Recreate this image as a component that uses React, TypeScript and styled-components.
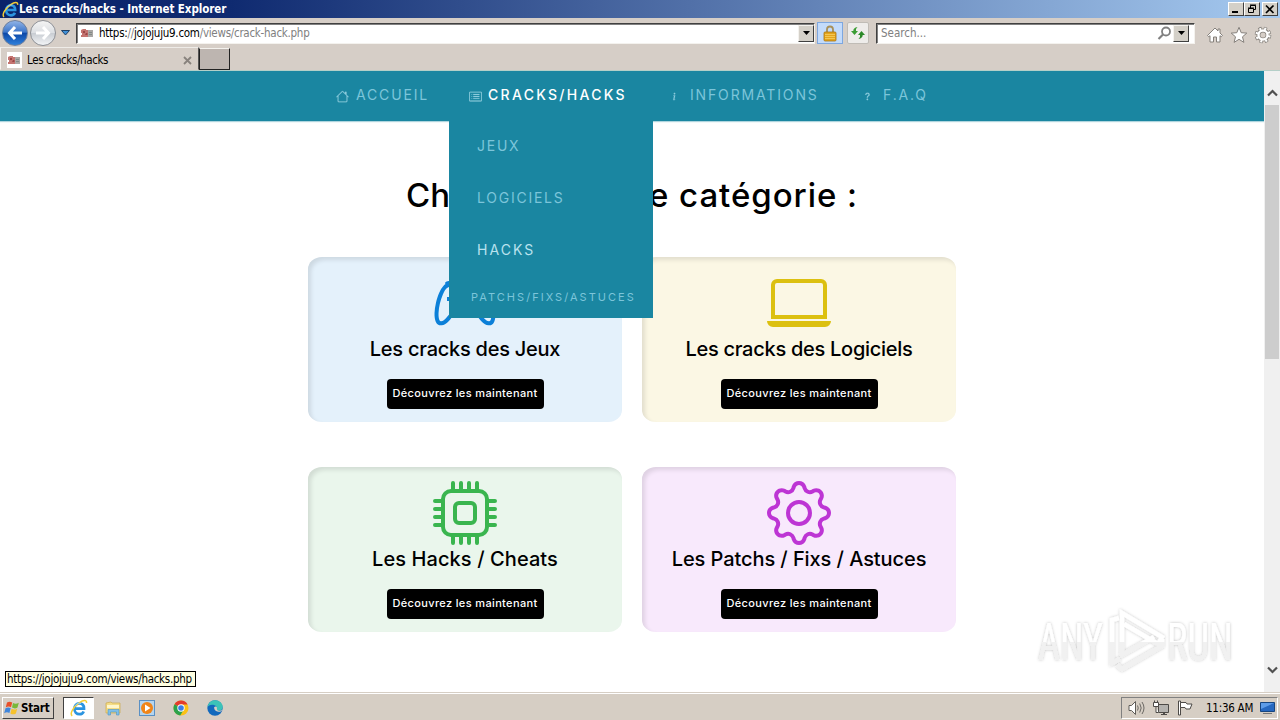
import React from "react";
import styled, { createGlobalStyle } from "styled-components";
import {
  BsHouse,
  BsCardList,
  BsInfo,
  BsQuestion,
  BsController,
  BsLaptop,
  BsCpu,
  BsGear,
} from "react-icons/bs";

const GlobalStyle = createGlobalStyle`
    * { box-sizing: border-box; }
    body {
        margin: 0;
        background: #fff;
        overflow: hidden;
    }
`;

const uiFont = `"DejaVu Sans Condensed", "DejaVu Sans", sans-serif`;
const siteFont = `Inter, Lato, sans-serif`;

const Screen = styled.div`
    width: 1280px;
    height: 720px;
    position: relative;
    display: flex;
    flex-direction: column;
    font-family: ${uiFont};
    font-stretch: condensed;
    font-size: 11px;
    color: #000;
    white-space: nowrap;
`;

/* ---------- browser window ---------- */

const TitleBar = styled.header`
    height: 18px;
    flex: none;
    display: flex;
    align-items: center;
    padding: 0 2px 0 2px;
    background: linear-gradient(90deg, #0a246a 0%, #0f2a70 18%, #a6caf0 100%);
`;

const Title = styled.span`
    flex: 1;
    color: #fff;
    font-weight: bold;
    font-size: 11.5px;
    letter-spacing: -0.07px;
`;

const WindowButton = styled.span<{ $gap?: number }>`
    width: 16px;
    height: 14px;
    margin-left: ${(p) => p.$gap || 0}px;
    background: #d4d0c8;
    border: 1px solid;
    border-color: #fff #404040 #404040 #fff;
    display: flex;
    align-items: center;
    justify-content: center;
`;

const Toolbar = styled.div`
    height: 29px;
    flex: none;
    display: flex;
    align-items: center;
    padding: 1px 0 0 2px;
    background: #d6cec7;
`;

const NavCircle = styled.span<{ $active?: boolean }>`
    width: 26px;
    height: 26px;
    margin-right: 2px;
    border-radius: 50%;
    border: 1px solid ${(p) => (p.$active ? "#6e7f9c" : "#8d9096")};
    background: ${(p) =>
      p.$active
        ? "linear-gradient(#8fb3e6 0%, #3d76ca 46%, #0d49a8 52%, #2e7fdb 100%)"
        : "linear-gradient(#f4f4f4 0%, #dcdfe3 48%, #c9cdd3 52%, #f2f4f6 100%)"};
    display: flex;
    align-items: center;
    justify-content: center;
`;

const Field = styled.div<{ $width: number }>`
    width: ${(p) => p.$width}px;
    height: 21px;
    display: flex;
    align-items: center;
    background: #fff;
    border: 1px solid;
    border-color: #404040 #f4f2ee #f4f2ee #404040;
    box-shadow: inset 1px 1px 0 #808080;
`;

const Url = styled.span`
    flex: 1;
    font-size: 11.5px;
    letter-spacing: -0.27px;
    color: #808080;

    b{
        font-weight: normal;
        color: #000;
    }
`;

const Search = styled(Url)`
    padding-left: 4px;
    letter-spacing: 0;
`;

const DropButton = styled.span`
    width: 16px;
    height: 17px;
    background: #d4d0c8;
    border: 1px solid;
    border-color: #f4f2ee #404040 #404040 #f4f2ee;
    display: flex;
    align-items: center;
    justify-content: center;
`;

const ToolButton = styled.span<{ $lit?: boolean }>`
    width: ${(p) => (p.$lit ? 26 : 22)}px;
    height: 22px;
    margin-left: ${(p) => (p.$lit ? 2 : 4)}px;
    border: 1px solid ${(p) => (p.$lit ? "#7da7e0" : "#c0bcb6")};
    border-radius: ${(p) => (p.$lit ? 0 : 2)}px;
    background: ${(p) => (p.$lit ? "#c3dbfb" : "#eeecea")};
    display: flex;
    align-items: center;
    justify-content: center;
`;

const ToolIcons = styled.div`
    display: flex;
    align-items: center;
    gap: 6px;
    margin: 3px 0 0 11px;
`;

const TabRow = styled.div`
    height: 24px;
    flex: none;
    display: flex;
    background: #d6cec7;
    border-bottom: 1px solid #b4cfc8;
`;

const Tab = styled.div`
    width: 199px;
    height: 23px;
    display: flex;
    align-items: center;
    padding: 3px 6px 0 6px;
    border: 1px solid;
    border-color: #efece8 #555 transparent #f4f2ee;

    span{
        flex: 1;
        padding-left: 5px;
        font-size: 11.5px;
        letter-spacing: -0.4px;
    }
`;

const FaviconBox = styled.i`
    width: 15px;
    height: 16px;
    background: #fff;
    display: flex;
    align-items: center;
    justify-content: center;
`;

const NewTab = styled.div`
    width: 31px;
    height: 22px;
    margin-top: 1px;
    background: #bdb5b0;
    border: 1px solid;
    border-color: #f4f2ee #222 #222 #222;
`;

/* ---------- page ---------- */

const Viewport = styled.div`
    height: 621px;
    flex: none;
    display: flex;
`;

const Page = styled.div`
    width: 1264px;
    background: #fff;
    font-family: ${siteFont};
    font-stretch: normal;
`;

const Menu = styled.nav`
    height: 50px;
    padding-left: 316px;
    display: flex;
    background: #1a86a1;
    box-shadow: 0 1px 1px rgba(26, 134, 161, 0.35);
`;

const MenuItem = styled.div<{ $width: number; $active?: boolean }>`
    position: relative;
    width: ${(p) => p.$width}px;
    padding-left: 20px;
    display: flex;
    align-items: center;
    font-size: 14px;
    letter-spacing: 1.85px;
    color: ${(p) => (p.$active ? "#fff" : "#7cc5da")};

    > span{
        margin-top: -3px;
        font-weight: ${(p) => (p.$active ? 500 : 400)};
        letter-spacing: ${(p) => (p.$active ? 2.3 : 1.85)}px;
    }
`;

const MenuIcon = styled.i<{ $box: number }>`
    width: ${(p) => p.$box}px;
    display: flex;
    color: #8ccbdc;
    font-size: 13px;

    svg{
        stroke: currentColor;
        stroke-width: 0.2;
    }
`;

const SubMenu = styled.div`
    position: absolute;
    top: 50px;
    left: 0;
    width: 204px;
    height: 197px;
    z-index: 2;
    background: #1a86a1;
`;

const SubItem = styled.div<{ $small?: boolean; $hover?: boolean }>`
    height: ${(p) => (p.$small ? 42 : 52)}px;
    line-height: ${(p) => (p.$small ? 41 : 50)}px;
    padding-left: ${(p) => (p.$small ? 22 : 28)}px;
    font-size: ${(p) => (p.$small ? 11 : 14)}px;
    letter-spacing: ${(p) => (p.$small || p.$hover ? 2.04 : 1.75)}px;
    color: ${(p) => (p.$hover ? "#b9e2ee" : "#7cc5da")};
`;

const Heading = styled.h1`
    margin: 49px 0 0;
    height: 50px;
    line-height: 50px;
    font-size: 33px;
    font-weight: 500;
    letter-spacing: 0.05px;
    text-align: center;
    color: #000;

    span{
        letter-spacing: 0.95px;
    }
`;

const Grid = styled.main`
    width: 648px;
    margin: 37px auto 0;
    display: grid;
    grid-template-columns: 314px 314px;
    gap: 45px 20px;
`;

const Card = styled.section<{ $bg: string; $ink: string }>`
    height: 165px;
    padding-top: 14px;
    display: flex;
    flex-direction: column;
    align-items: center;
    background: ${(p) => p.$bg};
    border-radius: 14px / 12px;
    box-shadow: inset 3px 3px 4px rgba(0, 0, 0, 0.1);

    > svg{
        width: 64px;
        height: 64px;
        flex: none;
        color: ${(p) => p.$ink};
    }
`;

const CardTitle = styled.h2<{ $spacing: number }>`
    margin: 0 0 15px;
    height: 29px;
    line-height: 28px;
    font-size: 20px;
    font-weight: 500;
    letter-spacing: ${(p) => p.$spacing}px;
`;

const CardButton = styled.button`
    width: 157px;
    height: 30px;
    padding: 0 0 2px;
    border: none;
    border-radius: 4px;
    background: #000;
    color: #fff;
    font-family: ${siteFont};
    font-size: 11px;
    font-weight: 500;
    letter-spacing: 0.36px;
`;

const ScrollBar = styled.div`
    width: 16px;
    padding: 18px 1px;
    display: flex;
    flex-direction: column;
    align-items: center;
    background: #f0f0f0;
`;

const Thumb = styled.div`
    width: 14px;
    height: 254px;
    margin: 8px 0 auto;
    background: #cdcdcd;
`;

const StatusTip = styled.div`
    position: absolute;
    left: 5px;
    top: 671px;
    width: 191px;
    height: 16px;
    line-height: 14px;
    padding-left: 1px;
    border: 1px solid #000;
    background: #ffffe1;
    font-size: 11.5px;
    letter-spacing: -0.29px;
`;

const Watermark = styled.div`
    position: absolute;
    left: 1026px;
    top: 596px;
    width: 220px;
    height: 90px;
`;

/* ---------- taskbar ---------- */

const TaskBar = styled.footer`
    height: 28px;
    display: flex;
    align-items: center;
    padding: 3px 2px 1px 2px;
    background: #d6cec4;
    border-top: 1px solid #d6cec4;
    box-shadow: inset 0 1px 0 #fff;
`;

const StartButton = styled.button`
    width: 52px;
    height: 22px;
    margin-right: 9px;
    padding: 0 2px 0 1px;
    display: flex;
    align-items: center;
    background: #d6cec4;
    border: 1px solid;
    border-color: #fff #404040 #404040 #fff;
    font-family: ${uiFont};
    font-stretch: condensed;
    font-size: 11.5px;
    font-weight: bold;
    letter-spacing: -0.2px;
`;

const Task = styled.span<{ $open?: boolean }>`
    width: ${(p) => (p.$open ? 31 : 34)}px;
    height: 22px;
    margin-right: ${(p) => (p.$open ? 2 : 0)}px;
    display: flex;
    align-items: center;
    justify-content: center;
    background: ${(p) => (p.$open ? "#fff" : "none")};
    border: ${(p) => (p.$open ? "1px solid" : "none")};
    border-color: #404040 #fff #fff #404040;
`;

const Tray = styled.div`
    width: 157px;
    height: 22px;
    margin-left: auto;
    padding: 0 2px 0 6px;
    display: flex;
    align-items: center;
    border: 1px solid;
    border-color: #808080 #fff #fff #808080;

    svg{
        margin-right: 8px;
    }
    svg:last-child{
        margin: 0 0 0 auto;
    }
    span{
        padding-left: 5px;
        font-size: 11.5px;
        letter-spacing: -0.25px;
    }
`;

const IeLogo = ({ size }: { size: number }) => (
  <svg width={size} height={size} viewBox="0 0 18 18" fill="none">
    <path d="M4.5 9.6H14C14 6.2 12 4.4 9.4 4.4C6.5 4.4 4.4 6.7 4.4 9.8C4.4 13 6.6 15.2 9.4 15.2C11.4 15.2 13 14.2 13.7 12.4" stroke="#2b94e0" strokeWidth="2.7" />
    <path d="M2.2 16.8C-.6 14.8 3.3 7.8 9.2 3.8C13.4 1 17 .6 16.5 4" stroke="#f5ce36" strokeWidth="1.5" />
    <path d="M5 6.8C6.4 4.6 8.8 3.8 11 4.4" stroke="#8fd2ff" strokeWidth=".9" />
  </svg>
);

const Favicon = () => (
  <svg width="13" height="10" viewBox="0 0 13 10">
    <path d="M0 2l2-1h3v1h2v7H0V7h1V5H0z" fill="#c47470" />
    <path d="M2 3h2v2H2zM5 5h1.500v2H4z" fill="#9c4646" />
    <path d="M7 2h5v7H7z" fill="#aaa7a5" />
    <path d="M8 4h3v1H8zM8 6h3v1H8z" fill="#828a87" />
  </svg>
);

const DownArrow = () => (
  <svg width="7" height="4" viewBox="0 0 7 4">
    <path d="M0 0h7L3.5 4z" fill="#000" />
  </svg>
);

const Chevron = ({ up }: { up?: boolean }) => (
  <svg width="11" height="8" viewBox="0 0 11 8" fill="none">
    <path d={up ? "M1 6.5L5.5 2L10 6.5" : "M1 1.5L5.5 6L10 1.5"} stroke="#505050" strokeWidth="2.2" />
  </svg>
);

const cards = [
  { title: "Les cracks des Jeux", bg: "#e4f1fb", ink: "#0c80d8", spacing: -0.25, icon: <BsController /> },
  { title: "Les cracks des Logiciels", bg: "#fbf7e4", ink: "#dcc010", spacing: -0.27, icon: <BsLaptop /> },
  { title: "Les Hacks / Cheats", bg: "#eaf6ec", ink: "#3ab54f", spacing: 0.08, icon: <BsCpu /> },
  { title: "Les Patchs / Fixs / Astuces", bg: "#f8e9fc", ink: "#bd35d4", spacing: -0.08, icon: <BsGear /> },
];

export default function App() {
  return (
    <>
      <GlobalStyle />
      <Screen>
        <TitleBar>
          <IeLogo size={17} />
          <Title>Les cracks/hacks - Internet Explorer</Title>
          <WindowButton>
            <svg width="10" height="10"><path d="M1 7h6v2H1z" /></svg>
          </WindowButton>
          <WindowButton>
            <svg width="10" height="10" fill="none" stroke="#000">
              <path d="M3.5 4V1.5h5v4H7M3 1h6M1.5 4.5h5v4h-5zM1 4h6" />
            </svg>
          </WindowButton>
          <WindowButton $gap={2}>
            <svg width="10" height="10"><path d="M1 1.5L8.5 9M8.5 1.5L1 9" stroke="#000" strokeWidth="1.7" /></svg>
          </WindowButton>
        </TitleBar>

        <Toolbar>
          <NavCircle $active>
            <svg width="16" height="14" fill="none" stroke="#fff" strokeWidth="3">
              <path d="M8 1L2.5 7L8 13M3 7h12" />
            </svg>
          </NavCircle>
          <NavCircle>
            <svg width="16" height="14" fill="none" stroke="#fff" strokeWidth="3">
              <path d="M8 1L13.5 7L8 13M13 7H1" />
            </svg>
          </NavCircle>
          <svg width="18" height="8">
            <path d="M3.5 1.5h8L7.5 6z" fill="#3f8fd6" stroke="#1c3f66" />
          </svg>
          <Field $width={739}>
            <svg width="4" height="10" />
            <Favicon />
            <svg width="5" height="10" />
            <Url><b>https:</b>//<b>jojojuju9.com</b>/views/crack-hack.php</Url>
            <DropButton><DownArrow /></DropButton>
          </Field>
          <ToolButton $lit>
            <svg width="14" height="17" viewBox="0 0 14 17">
              <path d="M4 8V4.5a3 3 0 0 1 6 0V8" fill="none" stroke="#a8905a" strokeWidth="1.8" />
              <rect x="1" y="7" width="12" height="9" rx="1" fill="#e5a51e" stroke="#a87310" strokeWidth=".8" />
              <path d="M2 9.5h10M2 11.5h10M2 13.5h10" stroke="#f7cf62" strokeWidth=".8" />
            </svg>
          </ToolButton>
          <ToolButton>
            <svg width="16" height="14" viewBox="0 0 16 14">
              <path d="M4.5 9L1 5h2.3C3.3 3 4.5 1.5 7.5 1L6 3v2h2z" fill="#3a9c33" />
              <path d="M11.5 5L15 9h-2.3c0 2-1.4 3.500-4.200 4L10 11V9H8z" fill="#2d8a2a" />
            </svg>
          </ToolButton>
          <svg width="7" height="10" />
          <Field $width={319}>
            <Search>Search...</Search>
            <svg width="15" height="15" viewBox="0 0 15 15" fill="none" stroke="#808080">
              <circle cx="9" cy="5.500" r="4" strokeWidth="1.8" />
              <path d="M6 8.500L1.500 13" strokeWidth="2.200" />
            </svg>
            <svg width="1" height="10" />
            <DropButton><DownArrow /></DropButton>
            <svg width="5" height="10" />
          </Field>
          <ToolIcons>
            <svg width="18" height="18" viewBox="0 0 18 18" fill="#fff" stroke="#85807b" strokeLinejoin="round">
              <path d="M9 2L1.500 9.500l1.300 1.200L4 9.700V16h3.500v-5h3v5H14V9.700l1.200 1l1.300-1.200L14 7V3h-2v2z" />
            </svg>
            <svg width="18" height="18" viewBox="0 0 18 18" fill="#fff" stroke="#85807b" strokeLinejoin="round">
              <path d="M9 1.300l2.200 5.400 5.600.4-4.300 3.700 1.400 5.600L9 13.300l-4.900 3.100 1.400-5.600L1.200 7.100l5.600-.4z" />
            </svg>
            <svg width="18" height="18" viewBox="0 0 18 18" fill="none">
              <circle cx="9" cy="9" r="6.300" stroke="#85807b" strokeWidth="4" strokeDasharray="2.900 2.048" />
              <circle cx="9" cy="9" r="4.600" stroke="#85807b" strokeWidth="4" />
              <circle cx="9" cy="9" r="6.300" stroke="#fff" strokeWidth="2.600" strokeDasharray="1.900 3.048" strokeDashoffset="-.5" />
              <circle cx="9" cy="9" r="4.500" stroke="#fff" strokeWidth="2.400" />
            </svg>
          </ToolIcons>
        </Toolbar>

        <TabRow>
          <Tab>
            <FaviconBox><Favicon /></FaviconBox>
            <span>Les cracks/hacks</span>
            <svg width="9" height="9"><path d="M1 1l7 7M8 1L1 8" stroke="#88827d" strokeWidth="1.800" /></svg>
          </Tab>
          <NewTab />
        </TabRow>

        <Viewport>
          <Page>
            <Menu>
              <MenuItem $width={133}>
                <MenuIcon $box={20}><BsHouse /></MenuIcon>
                <span>ACCUEIL</span>
              </MenuItem>
              <MenuItem $width={199} $active>
                <MenuIcon $box={19}><BsCardList /></MenuIcon>
                <span>CRACKS/HACKS</span>
                <SubMenu>
                  <SubItem>JEUX</SubItem>
                  <SubItem>LOGICIELS</SubItem>
                  <SubItem $hover>HACKS</SubItem>
                  <SubItem $small>PATCHS/FIXS/ASTUCES</SubItem>
                </SubMenu>
              </MenuItem>
              <MenuItem $width={193}>
                <MenuIcon $box={22}><BsInfo /></MenuIcon>
                <span>INFORMATIONS</span>
              </MenuItem>
              <MenuItem $width={120}>
                <MenuIcon $box={22}><BsQuestion /></MenuIcon>
                <span>F.A.Q</span>
              </MenuItem>
            </Menu>
            <Heading>Choisissez votr<span>e catégorie :</span></Heading>
            <Grid>
              {cards.map((c) => (
                <Card key={c.title} $bg={c.bg} $ink={c.ink}>
                  {c.icon}
                  <CardTitle $spacing={c.spacing}>{c.title}</CardTitle>
                  <CardButton>Découvrez les maintenant</CardButton>
                </Card>
              ))}
            </Grid>
          </Page>
          <ScrollBar>
            <Chevron up />
            <Thumb />
            <Chevron />
          </ScrollBar>
        </Viewport>

        <TaskBar>
          <StartButton>
            <svg width="17" height="16" viewBox="0 0 17 16">
              <path d="M3 2.500c2-1.300 3.500-1 5.200 0L7 7.300C5.400 6.300 3.800 6.300 1.800 7.300z" fill="#e8502a" />
              <path d="M9 3c1.800 1 3.600 1 5.800-.2L13.500 7.600c-2 1.200-3.700 1-5.500 0z" fill="#78b83a" />
              <path d="M1.500 8.300c2-1.200 3.600-1 5.200 0l-1.300 4.800c-1.700-1-3.200-1-5.200.1z" fill="#3f86dc" />
              <path d="M7.600 8.800c1.800 1 3.500 1 5.600-.1l-1.300 4.800c-2 1.200-3.700 1.100-5.500 0z" fill="#f6c22c" />
            </svg>
            Start
          </StartButton>
          <Task $open><IeLogo size={18} /></Task>
          <Task>
            <svg width="17" height="16" viewBox="0 0 17 16">
              <path d="M1 3l5-1 1 1h8v10H1z" fill="#f4dc85" stroke="#cba94d" strokeWidth=".7" />
              <path d="M2 5h12v3H2z" fill="#fff6cc" />
              <path d="M3 15V9.500h11V15h-2.500v-3h-6v3z" fill="#7fbfe8" stroke="#4c93c4" strokeWidth=".6" />
            </svg>
          </Task>
          <Task>
            <svg width="16" height="16" viewBox="0 0 16 16">
              <rect x=".5" y=".5" width="15" height="15" fill="#b5d5ef" stroke="#5a90c4" />
              <circle cx="8" cy="8" r="6" fill="#f08519" />
              <path d="M6 4.500L11.500 8L6 11.500z" fill="#fff" />
            </svg>
          </Task>
          <Task>
            <svg width="16" height="16" viewBox="0 0 16 16">
              <circle cx="8" cy="8" r="7.500" fill="#fbc116" />
              <path d="M8 8L1.500 4.200A7.500 7.500 0 0 1 14.600 4.500H8z" fill="#e33b2e" />
              <path d="M1.500 4.200A7.500 7.500 0 0 0 7.200 15.500L10.800 9.800 8 8z" fill="#2ba24c" />
              <circle cx="8" cy="8" r="3.700" fill="#fff" />
              <circle cx="8" cy="8" r="2.800" fill="#3c7de6" />
            </svg>
          </Task>
          <Task>
            <svg width="16" height="16" viewBox="0 0 16 16">
              <circle cx="8" cy="8" r="7.700" fill="#1269bd" />
              <path d="M.4 7C1.200 2.800 4.300.3 8 .3c4.300 0 7.700 3.100 7.700 6.600 0 2.300-1.700 3.800-4 3.800-1.800 0-2.700-.8-2-1.700C10.900 7 8 4.500 5 4.700 2.700 4.800 1.100 6 .4 7z" fill="#3cc3b8" />
              <path d="M15.500 10.500c-3 2.500-8 1.500-8.500-3 1-1.500 3-1 3 .5-.5 1.500.5 2.700 2 2.700 1.500.1 2.700-.2 3.500-.9z" fill="#d6cec4" />
            </svg>
          </Task>
          <Tray>
            <svg width="17" height="16" viewBox="0 0 17 16" fill="#fff" stroke="#5f5c58">
              <path d="M1 5.500h2.500L7.500 1.500v13L3.500 10.500H1z" />
              <path d="M9.500 5.500q1.500 2.500 0 5M11.700 3.500q3 4.500 0 9M14 2q4 6 0 12" fill="none" strokeWidth=".9" />
            </svg>
            <svg width="16" height="16" viewBox="0 0 16 16" fill="#fff" stroke="#4d4a47">
              <path d="M5.500 4.500h10v8h-10z" fill="#b4b2af" />
              <path d="M8 14.500h6M10 13.500h2" />
              <path d="M.5 2.500h5v4h-5zM3 6.500v6h2.500M1.500.5v2M4.500.5v2" />
            </svg>
            <svg width="16" height="16" viewBox="0 0 16 16" fill="#fff" stroke="#4d4a47">
              <path d="M1.500 1h2v14h-2z" />
              <path d="M3.500 2.500H9l1 1.500h5l-2 5H9L8 7.500H3.500z" />
            </svg>
            <span>11:36 AM</span>
            <svg width="15" height="14" viewBox="0 0 15 14">
              <path d="M.5 1.500h14v9H.5z" fill="#2668c0" stroke="#174680" />
              <path d="M1 2h13L1 8z" fill="#5d9ce8" />
              <path d="M3 12.500h9" stroke="#777" />
            </svg>
          </Tray>
        </TaskBar>

        <StatusTip>https://jojojuju9.com/views/hacks.php</StatusTip>
        <Watermark>
          <svg width="220" height="90" viewBox="-10 -10 220 90">
            <defs>
              <filter id="soft" x="-10%" y="-10%" width="120%" height="120%">
                <feDropShadow dx="0" dy="0" stdDeviation="1.500" floodColor="#000" floodOpacity=".25" />
              </filter>
              <linearGradient id="fade" x1="0" y1="0" x2="0" y2="70" gradientUnits="userSpaceOnUse">
                <stop offset=".51" stopColor="#fff" />
                <stop offset=".52" stopColor="#f1f1f1" />
              </linearGradient>
            </defs>
            <g filter="url(#soft)" fill="url(#fade)">
              <text x="2" y="54" fontFamily="Liberation Sans Narrow, Roboto, sans-serif" fontSize="51" textLength="65" lengthAdjust="spacingAndGlyphs">ANY</text>
              <text x="131" y="54" fontFamily="Liberation Sans Narrow, Roboto, sans-serif" fontSize="51" textLength="66" lengthAdjust="spacingAndGlyphs">RUN</text>
              <g fill="none" stroke="url(#fade)" strokeWidth="4.500">
                <path d="M83 12L76 14V57L84 53" />
                <path d="M86 50V7L126 31L122 38L88 18" />
                <path d="M84 50L118 31" />
                <path d="M81 59L86 63L126 40V33" />
              </g>
            </g>
          </svg>
        </Watermark>
      </Screen>
    </>
  );
}
